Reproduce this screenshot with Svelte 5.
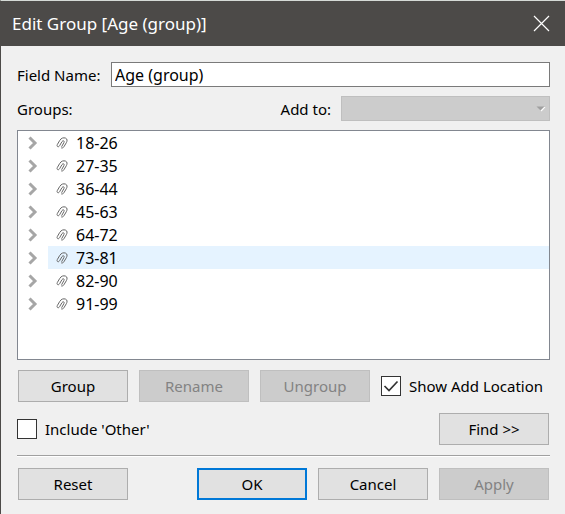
<script>
  let fieldName = $state('Age (group)');
  let showAddLocation = $state(true);
  let includeOther = $state(false);
  let selected = $state('73-81');
  const groups = ['18-26', '27-35', '36-44', '45-63', '64-72', '73-81', '82-90', '91-99'];
</script>

<div class="dialog" role="dialog" aria-labelledby="title">
  <header>
    <h1 id="title">Edit Group [Age (group)]</h1>
    <button class="close" aria-label="Close">
      <svg width="17" height="17" viewBox="0 0 17 17"><path d="M1 1L16 16M16 1L1 16" fill="none" stroke="#fff" stroke-width="1.2" /></svg>
    </button>
  </header>

  <main>
    <div class="row field">
      <label for="name">Field Name:</label>
      <input id="name" class="text" type="text" bind:value={fieldName} />
    </div>

    <div class="row groups">
      <span id="groups-label">Groups:</span>
      <div class="add">
        <label for="add">Add to:</label>
        <div class="select">
          <select id="add" disabled></select>
          <svg width="10" height="6" viewBox="0 0 10 6"><path d="M2 1H9.500L5.500 5.500z" fill="#fff" /><path d="M0.500 0.500H8.500L4.500 4.500z" fill="#a0a0a0" /></svg>
        </div>
      </div>
    </div>

    <ul class="tree" aria-labelledby="groups-label">
      {#each groups as g}
        <li>
          <button class="expand" aria-label="Expand {g}">
            <svg width="10" height="14" viewBox="0 0 10 14"><path d="M1.500 1.500L7 7L1.500 12.500" fill="none" stroke="#a6a6a6" stroke-width="3" /></svg>
          </button>
          <button class="item" class:selected={selected === g} onclick={() => (selected = g)}>
            <svg width="12" height="12" viewBox="0 0 12 12"><path d="M5.800 9.400L7.900 5.600C8.800 3.800 7 3 6 4.600L3.600 8.700C2.400 10.700.400 9.600 1.300 7.600L3.700 3.500C5.200.900 7.600.400 9.500 1.100C11.500 1.900 11.300 4 10.400 5.600L8 9.600C7.400 10.600 6.600 11.200 5.600 11" fill="none" stroke="#666" stroke-width="1" stroke-linecap="round" /></svg>
            <span>{g}</span>
          </button>
        </li>
      {/each}
    </ul>

    <div class="row actions">
      <button class="btn">Group</button>
      <button class="btn" disabled>Rename</button>
      <button class="btn" disabled>Ungroup</button>
      <label class="check"><input type="checkbox" bind:checked={showAddLocation} /><span>Show Add Location</span></label>
    </div>

    <div class="row other">
      <label class="check"><input type="checkbox" bind:checked={includeOther} /><span>Include 'Other'</span></label>
      <button class="btn">Find &gt;&gt;</button>
    </div>

    <footer>
      <button class="btn">Reset</button>
      <div class="confirm">
        <button class="btn primary">OK</button>
        <button class="btn">Cancel</button>
        <button class="btn" disabled>Apply</button>
      </div>
    </footer>
  </main>
</div>

<style>
  :global(body) {
    background: #f0f0f0;
  }
  .dialog,
  .dialog * {
    box-sizing: border-box;
  }
  .dialog {
    min-height: 100vh;
    border-top: 1px solid #d5dad6;
    border-left: 1px solid #4c4a48;
    background: #f0f0f0;
    color: #000;
    font: 15px/20px 'Noto Sans', 'Open Sans', sans-serif;
  }
  button,
  input,
  select {
    font: inherit;
    color: inherit;
    margin: 0;
  }
  header {
    display: flex;
    align-items: center;
    justify-content: space-between;
    height: 45px;
    padding: 0 15px 0 11px;
    background: #4c4a48;
    color: #fff;
  }
  h1 {
    margin: 0;
    font-size: 17px;
    font-weight: 400;
  }
  .close {
    display: flex;
    padding: 0;
    border: 0;
    background: none;
  }
  main {
    padding: 16px 15px 14px 16px;
  }
  .row {
    display: flex;
    align-items: center;
  }
  .field {
    gap: 8px;
  }
  .field label {
    flex: none;
    width: 86px;
  }
  .text {
    flex: 1;
    min-width: 0;
    height: 25px;
    padding: 0 3px;
    border: 1px solid #7a7a7a;
    background: #fff;
    outline: 0;
    font-size: 16px;
  }
  .groups {
    justify-content: space-between;
    margin-top: 9px;
  }
  .add {
    display: flex;
    align-items: center;
    gap: 10px;
  }
  .select {
    position: relative;
    width: 209px;
  }
  select {
    display: block;
    width: 100%;
    height: 25px;
    appearance: none;
    border: 1px solid #bfbfbf;
    border-radius: 0;
    background: #ccc;
    opacity: 1;
  }
  .select svg {
    position: absolute;
    right: 4px;
    top: 10px;
    pointer-events: none;
  }
  .tree {
    min-height: 230px;
    margin: 9px 0 0;
    padding: 0;
    border: 1px solid #828790;
    background: #fff;
    list-style: none;
  }
  li {
    display: flex;
    height: 23px;
    font-size: 16px;
  }
  .expand,
  .item {
    display: flex;
    align-items: center;
    padding: 0;
    border: 0;
    background: none;
  }
  .expand {
    width: 30px;
    padding-left: 10px;
  }
  .item {
    flex: 1;
    gap: 8px;
    padding-left: 8px;
  }
  .item.selected {
    background: #e5f3ff;
  }
  .actions {
    gap: 11px;
    margin-top: 10px;
    padding-left: 1px;
  }
  .btn {
    width: 110px;
    height: 32px;
    padding: 0;
    border: 1px solid #adadad;
    background: #e1e1e1;
    text-align: center;
  }
  .btn:disabled {
    border-color: #bfbfbf;
    background: #ccc;
    color: #838383;
  }
  .primary {
    border: 2px solid #0078d7;
  }
  .check {
    display: flex;
    align-items: center;
    gap: 8px;
    white-space: nowrap;
  }
  .check input {
    flex: none;
    width: 20px;
    height: 20px;
    appearance: none;
    border: 1px solid #333;
    background: #fff;
  }
  .check input:checked {
    background: #fff url("data:image/svg+xml,%3Csvg xmlns='http://www.w3.org/2000/svg' viewBox='0 0 18 18'%3E%3Cpath d='M2.500 9L7 13.500L15.500 4.500' fill='none' stroke='%23333' stroke-width='1.700'/%3E%3C/svg%3E");
  }
  .other {
    justify-content: space-between;
    margin-top: 11px;
    padding-right: 1px;
  }
  footer {
    display: flex;
    justify-content: space-between;
    margin-top: 10px;
    padding: 12px 1px 0;
    border-top: 1px solid #a0a0a0;
    box-shadow: inset 0 1px #fff;
  }
  .confirm {
    display: flex;
    gap: 11px;
  }
</style>
